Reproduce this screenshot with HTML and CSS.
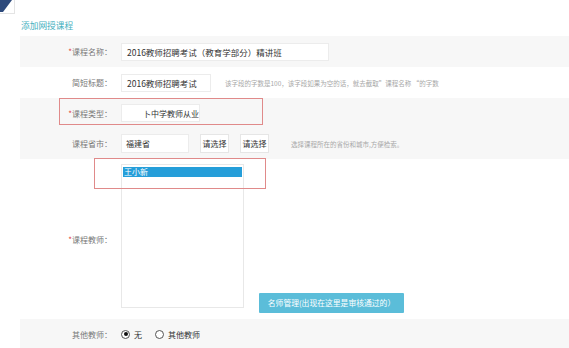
FILE: index.html
```html
<!DOCTYPE html>
<html lang="zh">
<head>
<meta charset="utf-8">
<link rel="stylesheet" href="styles.css">
</head>
<body>
<div class="corner">
  <svg width="15" height="14" viewBox="0 0 15 14"><polygon points="0,0 12,0 3,12 0,12" fill="#2d4a7c"/></svg>
</div>
<div class="title">添加网授课程</div>
<div class="panel">
  <div class="row gray h31">
    <div class="label"><span class="req">*</span>课程名称：</div>
    <div class="input w208">2016教师招聘考试（教育学部分）精讲班</div>
  </div>
  <div class="row h31">
    <div class="label">简短标题：</div>
    <div class="input w90">2016教师招聘考试</div>
    <div class="hint hint1">该字段的字数是100，该字段如果为空的话，就去截取”课程名称 “的字数</div>
  </div>
  <div class="row gray h30">
    <div class="label"><span class="req">*</span>课程类型：</div>
    <div class="input select">卜中学教师从业</div>
  </div>
  <div class="row gray h31">
    <div class="label">课程省市：</div>
    <div class="input w68">福建省</div>
    <div class="btn">请选择</div>
    <div class="btn">请选择</div>
    <div class="hint hint2">选择课程所在的省份和城市,方便检索。</div>
  </div>
  <div class="row teacher">
    <div class="label mid"><span class="req">*</span>课程教师：</div>
    <div class="listbox"><div class="opt">王小新</div></div>
    <div class="primary">名师管理(出现在这里是审核通过的）</div>
  </div>
  <div class="row gray last">
    <div class="label">其他教师：</div>
    <div class="radios">
      <span class="radio on"></span><span class="rtext">无</span>
      <span class="radio"></span><span class="rtext">其他教师</span>
    </div>
  </div>
  <div class="mark mark1"></div>
  <div class="mark mark2"></div>
</div>
</body>
</html>
```
FILE: styles.css
```css
html, body {
  margin: 0;
  padding: 0;
  background: #fff;
  font-family: "Noto Sans CJK SC", "Noto Sans", sans-serif;
  color: #333;
  overflow: hidden;
}
.corner {
  width: 15px;
  height: 14px;
  box-sizing: border-box;
  border-right: 1px solid #e4e4e4;
  border-bottom: 1px solid #e4e4e4;
  background: #fff;
}
.corner svg { display: block; }
.title {
  margin: 5px 0 0 21px;
  height: 17px;
  line-height: 13px;
  font-size: 8.7px;
  color: #45b0c0;
}
.panel {
  position: relative;
  margin-left: 20px;
}
.row {
  display: flex;
  align-items: center;
  background: #fff;
}
.row.gray { background: #f7f7f7; }
.h31 { height: 31px; }
.h30 { height: 30px; }
.label {
  width: 92px;
  flex: none;
  text-align: right;
  font-size: 8px;
  color: #777;
  margin-right: 9px;
  white-space: nowrap;
}
.req { color: #e0413a; }
.input {
  box-sizing: border-box;
  height: 18px;
  line-height: 17px;
  background: #fff;
  border: 1px solid #ececec;
  font-size: 8.5px;
  color: #333;
  padding-left: 5px;
  white-space: nowrap;
  overflow: hidden;
  flex: none;
}
.w208 { width: 208px; }
.w90 { width: 90px; }
.w68 { width: 68px; height: 19px; line-height: 18px; padding-left: 4px; font-size: 8px; }
.select { width: 79px; padding-left: 21px; font-size: 8px; }
.hint {
  font-size: 6.5px;
  color: #a8a8a8;
  white-space: nowrap;
}
.hint1 { margin-left: 14px; }
.hint2 { margin-left: 22px; }
.btn {
  box-sizing: border-box;
  width: 29px;
  height: 19px;
  line-height: 18px;
  margin-left: 11px;
  background: #fff;
  border: 1px solid #e6e6e6;
  font-size: 8px;
  text-align: center;
  color: #333;
  flex: none;
}
.teacher {
  height: 160px;
  align-items: flex-start;
}
.label.mid { align-self: center; }
.listbox {
  box-sizing: border-box;
  margin-top: 5px;
  width: 123px;
  height: 144px;
  background: #fff;
  border: 1px solid #e8e8e8;
  padding: 1px;
  flex: none;
}
.opt {
  height: 10px;
  line-height: 10px;
  background: #259ed9;
  color: #fff;
  font-size: 8px;
  padding-left: 1px;
  margin-top: 1px;
}
.primary {
  align-self: flex-end;
  margin: 0 0 6px 15px;
  width: 145px;
  height: 20px;
  line-height: 20px;
  background: #5bbdd9;
  color: #fff;
  font-size: 7.8px;
  text-align: center;
  border-radius: 1px;
}
.last { height: 30px; }
.radios {
  display: flex;
  align-items: center;
  font-size: 8px;
  color: #333;
}
.radio {
  box-sizing: border-box;
  width: 9px;
  height: 9px;
  border: 1px solid #555;
  border-radius: 50%;
  background: #fff;
  position: relative;
  flex: none;
}
.radio.on::after {
  content: "";
  position: absolute;
  left: 1.5px;
  top: 1.5px;
  width: 4px;
  height: 4px;
  border-radius: 50%;
  background: #111;
}
.rtext { margin: 0 13px 0 4px; }
.mark {
  position: absolute;
  box-sizing: border-box;
  border: 1px solid #e08a8a;
}
.mark1 { left: 39px; top: 62px; width: 204px; height: 27px; }
.mark2 { left: 74px; top: 122px; width: 172px; height: 31px; }
```
